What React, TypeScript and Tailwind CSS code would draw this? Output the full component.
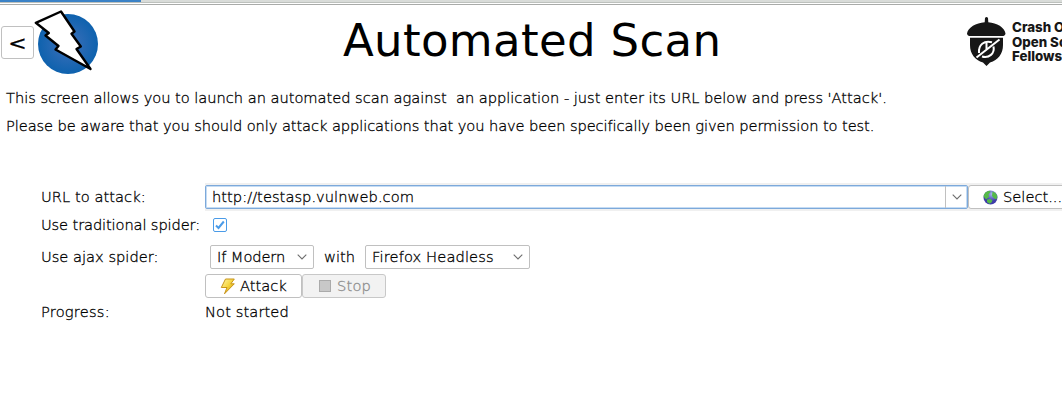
import React from "react";

const Chevron = () => (
  <svg width="10" height="6" viewBox="0 0 10 6" className="shrink-0" fill="none" stroke="#6e6e6e" strokeWidth="1.1">
    <path d="M.7 .7 5 5 9.3 .7" />
  </svg>
);

const Zap = () => (
  <svg width="66" height="68" viewBox="34 8 66 68" className="shrink-0">
    <defs>
      <radialGradient id="disc">
        <stop offset="0" stopColor="#4070ba" />
        <stop offset="1" stopColor="#0e62ae" />
      </radialGradient>
    </defs>
    <circle cx="68" cy="44" r="30" fill="url(#disc)" />
    <path d="M35.800 22.800 61 11.500 74.500 31.500 71.500 33.700 80.800 46.500 76.500 49 90.500 69 55.500 49.500 58.500 46 45.500 35.500 48.800 33Z" fill="#fff" stroke="#000" strokeWidth="2.4" strokeLinejoin="round" />
  </svg>
);

const Acorn = () => (
  <svg width="40" height="50" viewBox="966 16 40 50" className="shrink-0">
    <path d="M985 18q1.500-2 3 0l.3 4.300C997 23 1004.500 27.500 1005.500 33.500q0 2-2 2.400H969q-2-.4-2-2.400C968 27.500 976 23 984.700 22.300Z" fill="#171717" />
    <path d="M970 37.700H1003V45C1003 54 998 60 990 62.500L986.500 66 983 62.500C975 60 970 54 970 45Z" fill="#171717" />
    <path d="M999.500 39.500 976.500 57.500M992 42.300C984 40 978.300 45 979 53M982 56.500C989 58.500 995 53.500 993.500 46.500M986.500 42V49" fill="none" stroke="#fff" strokeWidth="2" />
  </svg>
);

const Bolt = () => (
  <svg width="16" height="17" viewBox="0 0 16 17" className="shrink-0">
    <defs>
      <linearGradient id="bolt" x2="1" y2="1">
        <stop offset="0" stopColor="#fff8b0" />
        <stop offset=".5" stopColor="#f5d43c" />
        <stop offset="1" stopColor="#c78a00" />
      </linearGradient>
    </defs>
    <path d="M5.500 1H14.300L10.800 5.800H14.300L4.500 15.800 7 9.500H1.300Z" fill="url(#bolt)" stroke="#c8941a" strokeWidth="1" strokeLinejoin="round" />
  </svg>
);

const Globe = () => (
  <svg width="15" height="15" viewBox="0 0 15 15" className="shrink-0">
    <defs>
      <radialGradient id="sea" cx=".6" cy=".25">
        <stop offset="0" stopColor="#a9b8ee" />
        <stop offset="1" stopColor="#3f3da8" />
      </radialGradient>
    </defs>
    <circle cx="7.500" cy="7.500" r="7" fill="url(#sea)" />
    <path d="M.6 6.500C1 3 4 .8 6.500 .7L7.500 2 5.500 4.500 6 7 3 9.500ZM9.500 1.500 12.500 3 14.300 6 13.500 9.500 11.500 8.500 9 6ZM4 9.500 7.500 9 9.500 10.500 8.500 12.500 6.500 13.700 4 12Z" fill="#55ba48" />
  </svg>
);

export default function App() {
  return (
    <main className="flex h-[414px] w-[1062px] flex-col overflow-hidden bg-white font-['DejaVu_Sans',sans-serif] text-[14.67px] leading-[20px] font-extralight whitespace-pre text-black [font-variant-ligatures:none] [-webkit-text-stroke-width:0.3px]">
      <div className="h-[5px] shrink-0 border-b border-[#a9aba9]">
        <div className="h-[3px] border-b border-[#bdc1bd] bg-[#d9dcd9]">
          <div className="h-[2px] w-[141px] bg-[#3b82c6]" />
        </div>
      </div>
      <header className="flex h-[74px] shrink-0 [-webkit-text-stroke-width:0px]">
        <button aria-label="Back" className="mt-[21px] ml-px flex h-[33px] w-[33px] shrink-0 items-center justify-center rounded-[3px] border border-[#c0c0c0] text-[20px] font-normal"><span className="inline-block scale-x-110 [-webkit-text-stroke-width:0.3px]">{"<"}</span></button>
        <div className="mt-[3px] w-[66px] shrink-0"><Zap /></div>
        <h1 className="ml-[243px] w-[623px] shrink-0 pt-[6px] text-[45px] leading-[60px] font-normal tracking-[0.34px]">Automated Scan</h1>
        <div className="mt-[11px] shrink-0"><Acorn /></div>
        <div className="mt-[15px] ml-[6px] shrink-0 font-['Inter',sans-serif] text-[13.300px] leading-[14.500px] font-extrabold text-[#171717]">
          <div>Crash Override</div>
          <div>Open Source</div>
          <div>Fellowship</div>
        </div>
      </header>
      <p className="mt-[9px] ml-[6px] h-[20px] tracking-[-0.038px]">This screen allows you to launch an automated scan against  an application - just enter its URL below and press 'Attack'.</p>
      <p className="mt-[8px] ml-[6px] h-[20px] tracking-[-0.095px]">Please be aware that you should only attack applications that you have been specifically been given permission to test.</p>
      <form className="mt-[47px] flex flex-col">
        <div className="flex h-[28px] items-center">
          <label className="ml-[41px] w-[164px] shrink-0 tracking-[0.05px]">URL to attack:</label>
          <div className="flex h-[28px] w-[857px] shrink-0 items-center bg-[#f0f0f0]">
            <div className="flex h-[24px] w-[763px] shrink-0 items-center rounded-[2px] border border-[#7da9da] bg-white pl-[6px] shadow-[inset_0_0_0_1px_#c5dcf4]">
              <span className="w-[733px] tracking-[0.03px]">http://testasp.vulnweb.com</span>
              <span className="flex h-full w-[22px] items-center justify-center border-l border-[#c0c0c0]"><Chevron /></span>
            </div>
            <button type="button" className="flex h-[24px] w-[106px] shrink-0 items-center gap-[5px] rounded-[3px] border border-[#c0c0c0] bg-white pl-[14px]"><Globe />Select...</button>
          </div>
        </div>
        <div className="flex h-[28px] items-center">
          <label className="ml-[41px] w-[172px] shrink-0 tracking-[-0.13px]">Use traditional spider:</label>
          <span className="flex size-[14px] items-center justify-center rounded-[2px] border border-[#4a9be8]">
            <svg width="10" height="10" viewBox="0 0 10 10" fill="none" stroke="#4a9be8" strokeWidth="2"><path d="M1 5.500 3.500 8 8.800 1.500" /></svg>
          </span>
        </div>
        <div className="flex h-[36px] items-center">
          <label className="ml-[41px] w-[169px] shrink-0">Use ajax spider:</label>
          <span className="flex h-[24px] w-[104px] items-center justify-between rounded-[2px] border border-[#c0c0c0] pr-[6px] pl-[6px]"><span className="tracking-[-0.1px]">If Modern</span><Chevron /></span>
          <span className="w-[51px] pl-[10px]">with</span>
          <span className="flex h-[24px] w-[165px] items-center justify-between rounded-[2px] border border-[#c0c0c0] pr-[6px] pl-[6px]"><span className="tracking-[0.12px]">Firefox Headless</span><Chevron /></span>
        </div>
        <div className="-mt-px ml-[205px] flex h-[24px] items-center">
          <button type="button" className="flex h-[24px] w-[97px] items-center gap-[4px] rounded-[3px] border border-[#c0c0c0] pl-[14px]"><Bolt />Attack</button>
          <button type="button" disabled className="flex h-[24px] w-[84px] items-center gap-[6px] rounded-[3px] border border-[#c8c8c8] bg-[#f2f2f2] pl-[16px] text-[#8c8c8c]"><span className="size-[12px] border border-[#aaa] bg-[#c8c8c8]" /><span className="tracking-[0.2px]">Stop</span></button>
        </div>
        <div className="mt-[4px] flex h-[20px]">
          <span className="ml-[41px] w-[164px] tracking-[0.2px]">Progress:</span><span className="tracking-[0.1px]">Not started</span>
        </div>
      </form>
    </main>
  );
}
